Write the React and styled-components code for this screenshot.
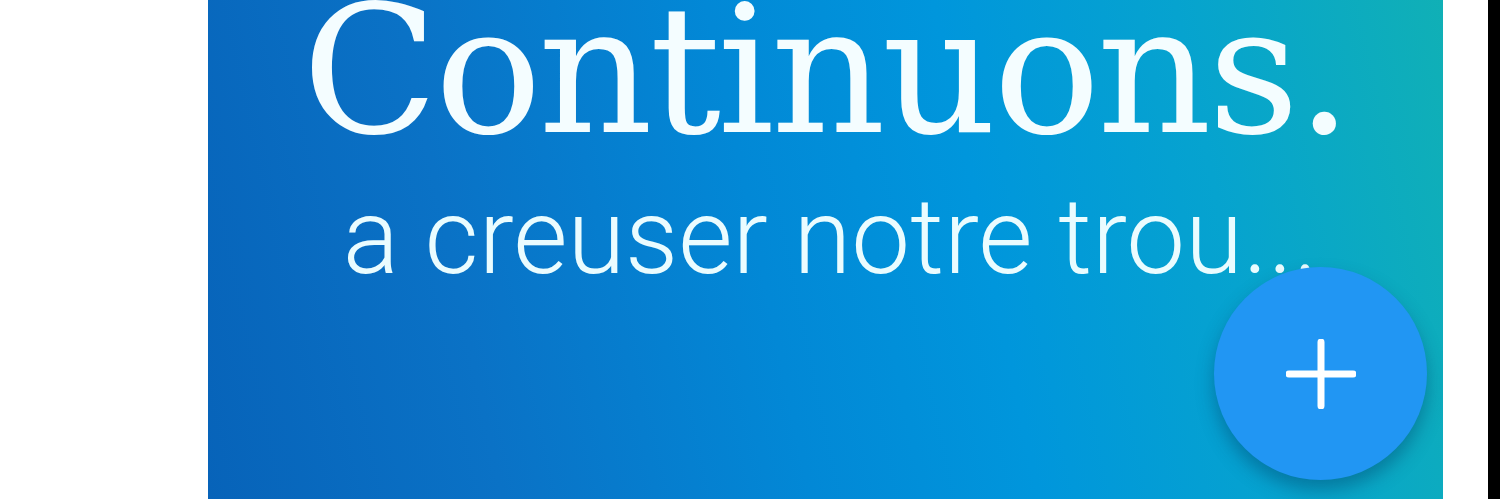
import React from 'react';
import styled, { createGlobalStyle } from 'styled-components';

const GlobalStyle = createGlobalStyle`
  html, body {
    margin: 0;
    padding: 0;
    background: #ffffff;
    overflow: hidden;
  }
`;

const App = () => {
  return (
    <>
      <GlobalStyle />
      <Page>
        <Gutter />
        <Banner>
          <Title>Continuons.</Title>
          <Subtitle>a creuser notre trou...</Subtitle>
          <Fab aria-label='Ajouter'>
            <svg width='70' height='70' viewBox='0 0 70 70'>
              <path
                d='M35 3 V67 M3 35 H67'
                stroke='#ffffff'
                strokeWidth='7'
                strokeLinecap='round'
              />
            </svg>
          </Fab>
        </Banner>
        <Spacer />
        <Edge />
      </Page>
    </>
  );
};

export default App;

// STYLED CSS

const Page = styled.div`
  display: flex;
  flex-direction: row;
  width: 1500px;
  height: 499px;
  background: #ffffff;
`;

const Gutter = styled.div`
  width: 208px;
  flex-shrink: 0;
`;

const Banner = styled.div`
  position: relative;
  width: 1235px;
  flex-shrink: 0;
  display: flex;
  flex-direction: column;
  align-items: center;
  overflow: hidden;
  background: linear-gradient(
    78deg,
    #0763b9 0%,
    #0a72c6 22%,
    #0288d6 45%,
    #0096dc 62%,
    #06a3cf 80%,
    #10b0b6 100%
  );
`;

const Title = styled.h1`
  margin: -27px 0 0 0;
  font-family: 'DejaVu Serif', 'Liberation Serif', serif;
  font-weight: 400;
  font-size: 178px;
  line-height: 1.1;
  letter-spacing: -3.5px;
  color: #f4fdff;
  white-space: nowrap;
`;

const Subtitle = styled.p`
  margin: 16px 0 0 0;
  padding-left: 10px;
  font-family: Roboto, 'Noto Sans', sans-serif;
  font-weight: 300;
  font-size: 105px;
  line-height: 1;
  color: #eafcff;
  white-space: nowrap;
`;

const Fab = styled.button`
  position: absolute;
  right: 16px;
  bottom: 19px;
  width: 213px;
  height: 213px;
  border: none;
  border-radius: 50%;
  background: #2196f3;
  display: flex;
  align-items: center;
  justify-content: center;
  box-shadow: 0 10px 18px rgba(0, 40, 80, 0.35);
  padding: 0;
`;

const Spacer = styled.div`
  width: 45px;
  flex-shrink: 0;
`;

const Edge = styled.div`
  flex: 1;
  background: #000000;
`;
